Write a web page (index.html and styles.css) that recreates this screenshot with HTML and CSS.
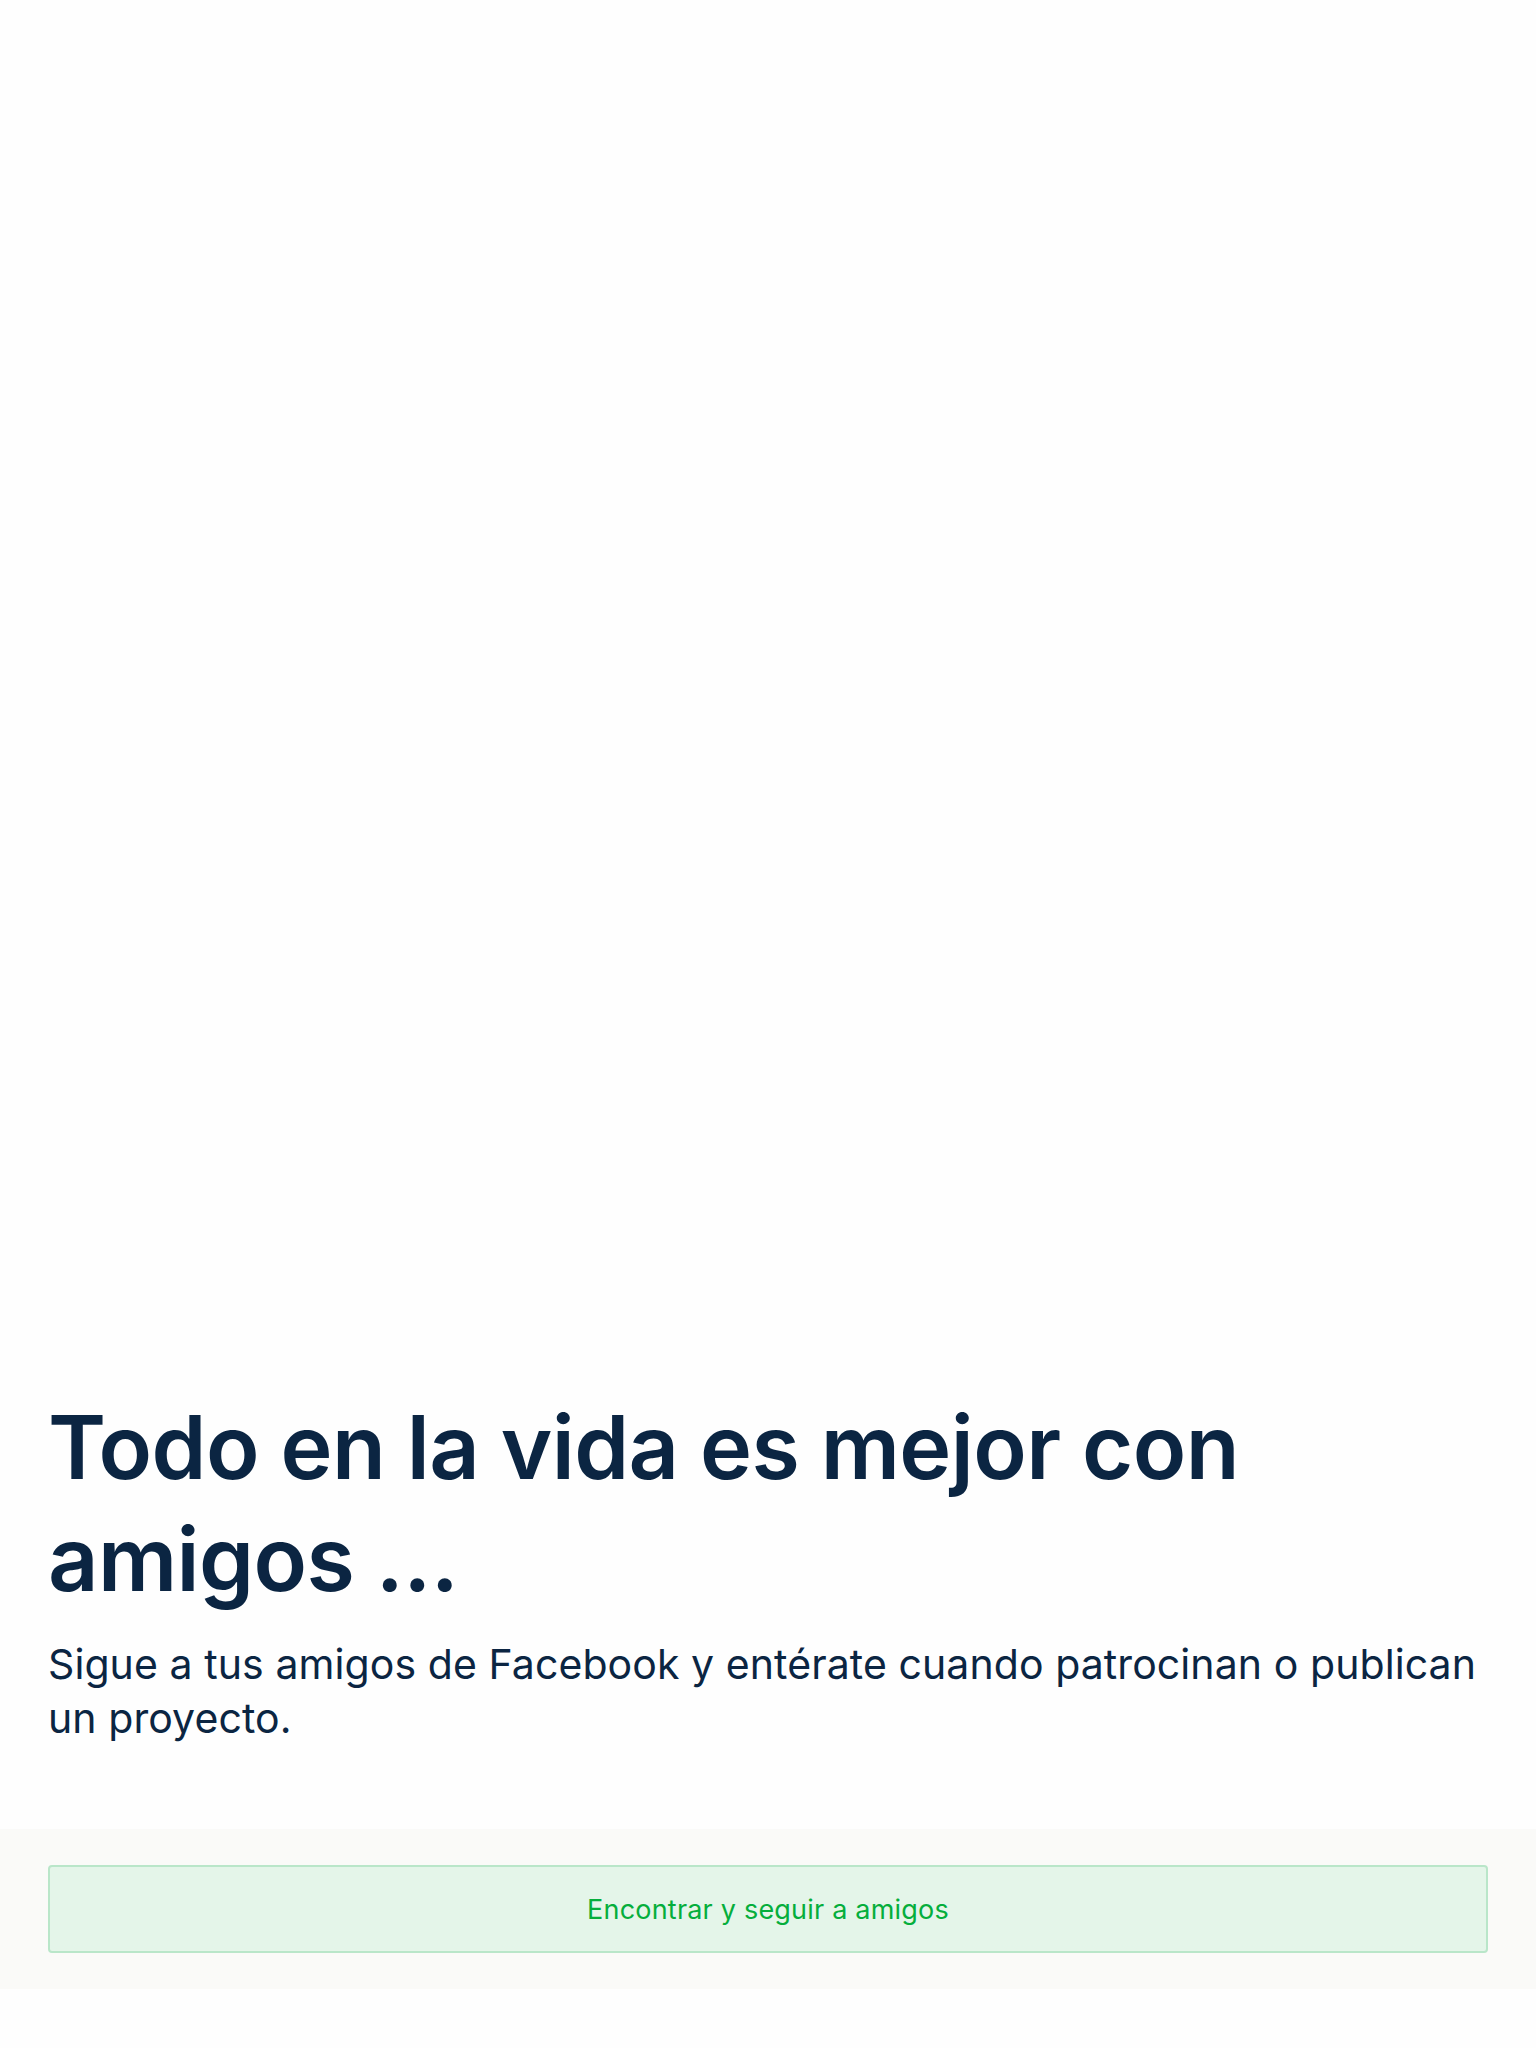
FILE: index.html
```html
<!DOCTYPE html>
<html lang="es">
<head>
<meta charset="utf-8">
<link rel="stylesheet" href="styles.css">
</head>
<body>
<main class="page">
  <div class="hero"></div>
  <section class="intro">
    <h1 class="title">Todo en la vida es mejor con amigos ...</h1>
    <p class="lead">Sigue a tus amigos de Facebook y entérate cuando patrocinan o publican un proyecto.</p>
  </section>
  <footer class="actions">
    <button class="btn-follow" type="button">Encontrar y seguir a amigos</button>
  </footer>
</main>
</body>
</html>
```
FILE: styles.css
```css
html, body {
  margin: 0;
  padding: 0;
  background: #fefefe;
}
body {
  font-family: Inter, "Noto Sans", sans-serif;
  color: #0b2542;
}
.page {
  width: 1536px;
  min-height: 2048px;
  display: flex;
  flex-direction: column;
}
.hero {
  height: 1391px;
}
.intro {
  padding: 0 48px;
}
.title {
  margin: 0;
  font-size: 88px;
  line-height: 112px;
  font-weight: 600;
  letter-spacing: -0.6px;
  color: #0b2542;
}
.lead {
  margin: 22px 0 0;
  font-size: 41px;
  line-height: 54px;
  font-weight: 400;
  letter-spacing: 0.08px;
  color: #0b2542;
}
.actions {
  margin-top: 84px;
  background: #fafaf8;
  padding: 36px 48px;
}
.btn-follow {
  display: block;
  width: 100%;
  height: 88px;
  border: 2px solid #b9e6c9;
  border-radius: 4px;
  background: #e4f5e9;
  color: #05ae3c;
  font-family: Inter, "Noto Sans", sans-serif;
  font-size: 27px;
  font-weight: 400;
  letter-spacing: 0.2px;
  cursor: pointer;
}
```
